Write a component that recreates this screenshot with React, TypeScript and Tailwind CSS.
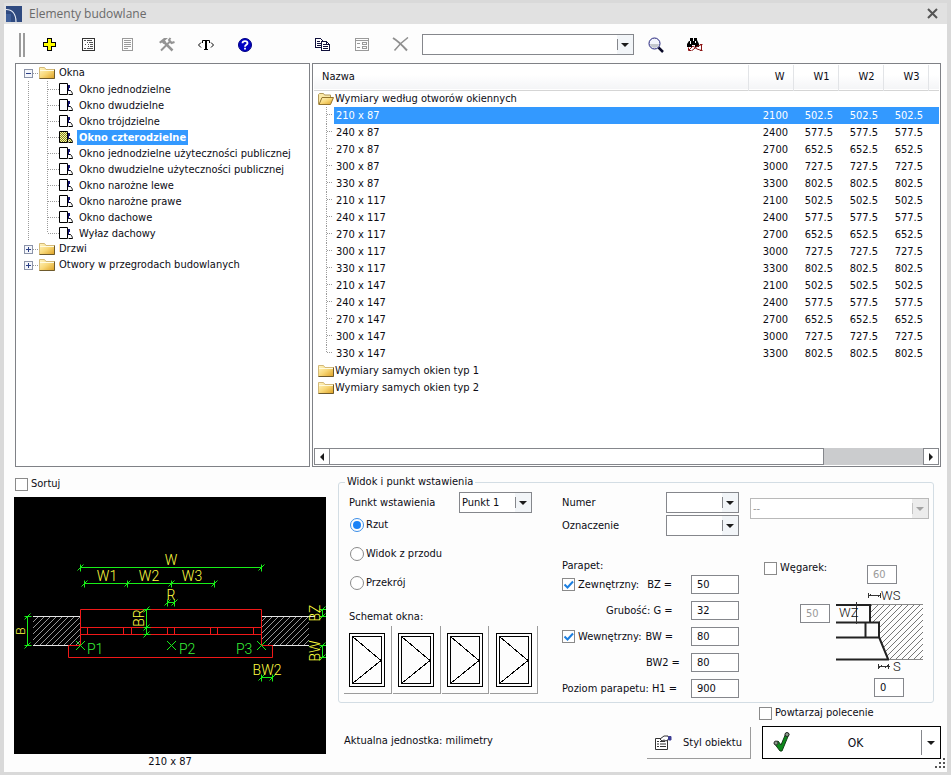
import { useState, type ReactNode } from "react";
import clsx from "clsx";

type SizeRow = { name: string; w: string; part: string };

const WINDOW_TYPES = [
  "Okno jednodzielne",
  "Okno dwudzielne",
  "Okno trójdzielne",
  "Okno czterodzielne",
  "Okno jednodzielne użyteczności publicznej",
  "Okno dwudzielne użyteczności publicznej",
  "Okno narożne lewe",
  "Okno narożne prawe",
  "Okno dachowe",
  "Wyłaz dachowy",
];

const WIDTHS = [
  { mm: "210", w: "2100", part: "502.5" },
  { mm: "240", w: "2400", part: "577.5" },
  { mm: "270", w: "2700", part: "652.5" },
  { mm: "300", w: "3000", part: "727.5" },
  { mm: "330", w: "3300", part: "802.5" },
];

const SIZES: SizeRow[] = ["87", "117", "147"].flatMap(h =>
  WIDTHS.map(x => ({ name: `${x.mm} x ${h}`, w: x.w, part: x.part }))
);

/* ---------- icons ---------- */

function Folder({ open = false }: { open?: boolean }) {
  return (
    <svg width="16" height="14" viewBox="0 0 16 14" className="shrink-0">
      <defs>
        <linearGradient id="gold" x1="0" y1="0" x2="1" y2="1">
          <stop offset="0" stopColor="#fff6c8" />
          <stop offset="0.5" stopColor="#f8d878" />
          <stop offset="1" stopColor="#dc9f22" />
        </linearGradient>
      </defs>
      {open ? (
        <>
          <path d="M.5 12.500v-10l1-1h4l1 1.500h6v3" fill="#fbe9a8" stroke="#b39a5a" />
          <path d="M1 12.500l3-7h11.500l-3 7z" fill="url(#gold)" stroke="#94742c" />
        </>
      ) : (
        <>
          <path d="M.5 12.500v-11h5l1.500 2h8.500v9z" fill="url(#gold)" stroke="#d3b978" />
          <path d="M1 4.500h14" stroke="#fffbe0" />
          <path d="M.5 12.500h15v-9" fill="none" stroke="#6e5a2c" />
        </>
      )}
    </svg>
  );
}

function WindowIcon({ selected = false }: { selected?: boolean }) {
  return (
    <svg width="15" height="14" viewBox="0 0 15 14" className="shrink-0">
      <defs>
        <pattern id="olive" width="2" height="2" patternUnits="userSpaceOnUse">
          <rect width="2" height="2" fill="#f4f4a8" />
          <rect width="1" height="1" fill="#85851c" />
          <rect x="1" y="1" width="1" height="1" fill="#85851c" />
        </pattern>
      </defs>
      <path d="M.5 1.500h8v11h-8z" fill={selected ? "url(#olive)" : "#fff"} stroke="#000" />
      <path d="M9 8.500h2.500c1 1 2 2.500 2 4h-4" fill={selected ? "url(#olive)" : "#fff"} stroke="#000" />
      <path d="M9 3h2v3h-2z" fill="#10106e" />
      <path d="M9.500 5v4" stroke="#10106e" />
    </svg>
  );
}

function ToolButton({ label, children }: { label: string; children: ReactNode }) {
  return (
    <button aria-label={label} className="flex w-[39px] h-6 items-center justify-center">
      {children}
    </button>
  );
}

function Arrow({ dir = "down", dim = false }: { dir?: "down" | "left" | "right"; dim?: boolean }) {
  const d = { down: "M0 2h8l-4 4z", left: "M6 0v8l-4-4z", right: "M2 0v8l4-4z" }[dir];
  return (
    <svg width="8" height="8" viewBox="0 0 8 8" fill={dim ? "#a3a3a3" : "#1b1b1b"}>
      <path d={d} />
    </svg>
  );
}

function PlusIcon() {
  return (
    <svg width="13" height="13" viewBox="0 0 13 13" shapeRendering="crispEdges">
      <path d="M4.500.5h4v4h4v4h-4v4h-4v-4h-4v-4h4z" fill="#ffff00" stroke="#000" />
    </svg>
  );
}

function DetailsIcon() {
  return (
    <svg width="13" height="13" viewBox="0 0 13 13" fill="none" stroke="#333" shapeRendering="crispEdges">
      <path d="M.5.5h12v12h-12z" />
      <path d="M2 2.500h2M5 2.500h5M5 4.500h1M7 4.500h4M3 6.500h1M6 6.500h1M8 6.500h3M6 8.500h1M8 8.500h3M2 10.500h2M5 10.500h6" stroke="#555" />
    </svg>
  );
}

function PageIcon() {
  return (
    <svg width="11" height="13" viewBox="0 0 11 13" fill="none" stroke="#9a9a9a" shapeRendering="crispEdges">
      <path d="M.5.5h10v12h-10z" />
      <path d="M2 2.500h7M2 4.500h7M2 6.500h7M2 8.500h7M2 10.500h4" />
    </svg>
  );
}

function ToolsIcon() {
  return (
    <svg width="16" height="15" viewBox="0 0 16 15" fill="none" stroke="#949494">
      <path d="M5 5l8.500 8.500" strokeWidth="2.500" />
      <path d="M11 4.500L2 13.500" strokeWidth="2" />
      <path d="M0 5l5-4h4L6 3.500 7 5 4.500 7 3 5.500 1.500 6.500z" fill="#949494" stroke="none" />
      <path d="M11.500 1L10 3l2.500 3 3-1" strokeWidth="2" />
    </svg>
  );
}

function TextIcon() {
  return (
    <svg width="18" height="14" viewBox="0 0 18 14" fill="none" stroke="#000">
      <path d="M4 4.500L1.500 7 4 9.500M14 4.500L16.500 7 14 9.500" />
      <path d="M5.500 5v-2.500h7V5M7 11.500h4" />
      <path d="M9 2.500v9" strokeWidth="2" />
    </svg>
  );
}

function HelpIcon() {
  return (
    <svg width="14" height="14" viewBox="0 0 14 14">
      <circle cx="7" cy="7" r="6.500" fill="#0000c4" stroke="#000080" />
      <path d="M4.500 5.200C4.500 2.400 9.500 2.400 9.500 5.200 9.500 6.700 7 6.700 7 8.700M7 9.800v1.700" fill="none" stroke="#fff" strokeWidth="1.800" />
    </svg>
  );
}

function CopyIcon() {
  return (
    <svg width="16" height="14" viewBox="0 0 16 14" fill="#fff" stroke="#10103c" shapeRendering="crispEdges">
      <path d="M.5.5h5l3 3v6h-8z" />
      <path d="M2 3.500h3M2 5.500h4M2 7.500h4" />
      <path d="M6.500 3.500h5l3 3v6h-8z" />
      <path d="M11.500 3.500v3h3M8 6.500h3M8 8.500h5M8 10.500h5" fill="none" />
    </svg>
  );
}

function FormIcon() {
  return (
    <svg width="14" height="13" viewBox="0 0 14 13" fill="none" stroke="#9a9a9a" shapeRendering="crispEdges">
      <path d="M.5.5h13v12h-13zM1 2.500h12" />
      <path d="M2 5.500h3M2 9.500h3M7.500 4.500h4v2h-4zM7.500 8.500h4v2h-4z" />
    </svg>
  );
}

function DeleteIcon() {
  return (
    <svg width="17" height="15" viewBox="0 0 17 15" fill="none" stroke="#8f8f8f">
      <path d="M1 1c5 3 9 7 14 12.500" strokeWidth="2" />
      <path d="M16 .5C11 4 7 8 2.500 13.500" strokeWidth="1.500" />
    </svg>
  );
}

function SearchIcon() {
  return (
    <svg width="16" height="16" viewBox="0 0 16 16">
      <circle cx="6.500" cy="6.500" r="5.500" fill="#f3f4fc" stroke="#20207a" />
      <path d="M2 7h9c0 5-9 5-9 0z" fill="#c3c6cc" />
      <path d="M10.500 10.500l4.500 4.500" stroke="#0a0a28" strokeWidth="2.500" />
    </svg>
  );
}

function FindIcon() {
  return (
    <svg width="16" height="15" viewBox="0 0 16 15">
      <path d="M2 4h1V1h3v3h1V1h3v2l2 4v3H8V8H5v2H0V7z" fill="#000" />
      <path d="M3.500 4v3M8.500 4v2" stroke="#fff" />
      <path d="M1.500 10.500v3h3M2 13l4-4 4 3 4.500 1.500v-6L10 9.500 5 13.500M13 7.500h2.500M13 13.500h2.500" fill="none" stroke="#8c1414" />
    </svg>
  );
}

/* ---------- form parts ---------- */

function Combo({
  label,
  options = [""],
  className,
  disabled = false,
}: {
  label: string;
  options?: string[];
  className?: string;
  disabled?: boolean;
}) {
  return (
    <div className={clsx("relative h-[21px] shrink-0", className)}>
      <select
        aria-label={label}
        disabled={disabled}
        className={clsx(
          "block size-full appearance-none border pl-0.5 pr-5 outline-none",
          disabled ? "border-[#b9b9b9] bg-white text-[#9a9a9a]" : "border-[#85878c] bg-white"
        )}
      >
        {options.map(o => <option key={o}>{o}</option>)}
      </select>
      <span
        className={clsx(
          "pointer-events-none absolute inset-y-px right-px flex w-4 items-center justify-center",
          disabled ? "bg-[#ececec]" : "bg-[#f2f5f8]"
        )}
      >
        <span className={clsx("absolute inset-y-1 left-0 border-l", disabled ? "border-[#c4c4c4]" : "border-[#85878c]")} />
        <Arrow dim={disabled} />
      </span>
    </div>
  );
}

function NumberBox({ label, value, className, disabled = false }: {
  label: string;
  value: string;
  className: string;
  disabled?: boolean;
}) {
  return (
    <input
      aria-label={label}
      defaultValue={value}
      disabled={disabled}
      className={clsx("h-[19px] shrink-0 border border-[#85878c] bg-white pl-[5px] outline-none disabled:text-[#9a9a9a]", className)}
    />
  );
}

function Check({ label, checked = false }: { label: string; checked?: boolean }) {
  return (
    <label className="flex items-center gap-[3px] whitespace-nowrap">
      <span className="relative size-[13px] shrink-0">
        <input
          type="checkbox"
          defaultChecked={checked}
          className="peer block size-[13px] appearance-none border border-[#8a8a8a] bg-white"
        />
        <svg viewBox="0 0 13 13" className="pointer-events-none absolute inset-0 hidden peer-checked:block">
          <path d="M2.500 6.500l3 3 5.500-6" fill="none" stroke="#1c7fe0" strokeWidth="2" />
        </svg>
      </span>
      {label}
    </label>
  );
}

function Radio({ label, checked = false }: { label: string; checked?: boolean }) {
  return (
    <label className="flex h-3.5 items-center gap-0.5">
      <input
        type="radio"
        name="widok"
        defaultChecked={checked}
        className="size-3.5 shrink-0 appearance-none rounded-full border border-[#8a8a8a] bg-white p-0.5 checked:border-[#3b8ee8] checked:bg-[#1a82f7] checked:bg-clip-content"
      />
      {label}
    </label>
  );
}

/* ---------- left tree ---------- */

function TreeBranch({ open }: { open: boolean }) {
  return (
    <svg width="15" height="16" viewBox="0 0 15 16" shapeRendering="crispEdges" className="shrink-0">
      <path d="M9 8.500h6" stroke="#9b9b9b" strokeDasharray="1 1" />
      <rect x=".5" y="4.500" width="8" height="8" fill="#f4f6fb" stroke="#8b93a8" />
      <path d={open ? "M2 8.500h5" : "M2 8.500h5M4.500 6v5"} stroke="#2b3f86" />
    </svg>
  );
}

function TreeFolder({ name, open = false }: { name: string; open?: boolean }) {
  return (
    <div className="flex h-4 items-center">
      <TreeBranch open={open} />
      <Folder />
      <span className="ml-1 leading-4">{name}</span>
    </div>
  );
}

function ElementTree() {
  const [selected, setSelected] = useState("Okno czterodzielne");
  return (
    <div className="w-[295px] shrink-0 border border-[#7f8186] bg-white pt-px pl-2">
      <ul>
        <li>
          <TreeFolder name="Okna" open />
          <ul>
            {WINDOW_TYPES.map((t, i) => (
              <li key={t} className="flex h-4 items-center">
                <svg width="35" height="16" viewBox="0 0 35 16" shapeRendering="crispEdges" className="shrink-0">
                  <path
                    d={i < WINDOW_TYPES.length - 1 ? "M4.500 0v16M23.500 0v16M24 8.500h11" : "M4.500 0v16M23.500 0v8M24 8.500h11"}
                    stroke="#9b9b9b"
                    strokeDasharray="1 1"
                  />
                </svg>
                <WindowIcon selected={t === selected} />
                <button
                  onClick={() => setSelected(t)}
                  className={clsx(
                    "ml-[3px] h-[15px] px-0.5 leading-[15px] whitespace-nowrap",
                    t === selected && "bg-[#3399ff] font-bold text-white"
                  )}
                >
                  {t}
                </button>
              </li>
            ))}
          </ul>
        </li>
        {["Drzwi", "Otwory w przegrodach budowlanych"].map(t => (
          <li key={t}><TreeFolder name={t} /></li>
        ))}
      </ul>
    </div>
  );
}

/* ---------- size list ---------- */

function FolderRow({ name, open = false }: { name: string; open?: boolean }) {
  return (
    <tr className="h-[17px]">
      <td colSpan={6} className="p-0">
        <div className="flex items-center gap-px pl-1">
          <Folder open={open} />
          {name}
        </div>
      </td>
    </tr>
  );
}

function SizeList() {
  const [active, setActive] = useState(0);
  return (
    <div className="flex min-w-0 flex-1 flex-col border border-[#7f8186] bg-white p-px">
      <table className="w-full table-fixed border-collapse">
        <colgroup>
          <col />
          <col className="w-[45px]" />
          <col className="w-[45px]" />
          <col className="w-[45px]" />
          <col className="w-[45px]" />
          <col className="w-[11px]" />
        </colgroup>
        <thead>
          <tr className="h-[25px] border-b border-[#d5d5d5] bg-linear-to-b from-white from-40% to-[#f4f5f7]">
            <th className="pl-2 text-left font-normal">Nazwa</th>
            {["W", "W1", "W2", "W3"].map(h => (
              <th key={h} className="border-l border-[#e2e4e7] pr-2 text-right font-normal">{h}</th>
            ))}
            <th className="border-l border-[#e2e4e7]" />
          </tr>
        </thead>
        <tbody>
          <FolderRow name="Wymiary według otworów okiennych" open />
          {SIZES.map((r, i) => {
            const on = i === active;
            const cell = clsx("p-0 pr-[5px] text-right", on && "bg-[#3399ff] text-white");
            return (
              <tr key={r.name} onClick={() => setActive(i)} className="h-[17px]">
                <td className="p-0">
                  <div className="flex h-[17px] items-center">
                    <svg width="20" height="17" viewBox="0 0 20 17" shapeRendering="crispEdges" className="shrink-0">
                      <path
                        d={i < SIZES.length - 1 ? "M12.500 0v17M13 7.500h6" : "M12.500 0v8M13 7.500h6"}
                        stroke="#9b9b9b"
                        strokeDasharray="1 1"
                      />
                    </svg>
                    <span className={clsx("h-[17px] flex-1 pl-0.5 leading-[17px]", on && "bg-[#3399ff] text-white")}>{r.name}</span>
                  </div>
                </td>
                <td className={cell}>{r.w}</td>
                <td className={cell}>{r.part}</td>
                <td className={cell}>{r.part}</td>
                <td className={cell}>{r.part}</td>
                <td className={cell} />
              </tr>
            );
          })}
          <FolderRow name="Wymiary samych okien typ 1" />
          <FolderRow name="Wymiary samych okien typ 2" />
        </tbody>
      </table>
      <div className="mt-auto flex h-[17px] bg-[#cbccce]">
        <button aria-label="W lewo" className="flex w-[17px] items-center justify-center border border-[#85878c] bg-white"><Arrow dir="left" /></button>
        <div className="w-5/6 border border-l-0 border-[#85878c] bg-white" />
        <div className="w-1/6" />
        <button aria-label="W prawo" className="flex w-[17px] items-center justify-center border border-[#85878c] bg-white"><Arrow dir="right" /></button>
      </div>
    </div>
  );
}

/* ---------- drawings ---------- */

// dimension line with slashed end ticks, horizontal
function DimH({ y, xs }: { y: number; xs: number[] }) {
  return (
    <g fill="none" stroke="#18ee18">
      <path d={`M${xs[0]} ${y}H${xs[xs.length - 1]}`} />
      <path d={xs.map(x => `M${x} ${y - 3}v7M${x - 3} ${y + 3}l6-6`).join("")} />
    </g>
  );
}

function DimV({ x, ys }: { x: number; ys: number[] }) {
  return (
    <g fill="none" stroke="#18ee18">
      <path d={`M${x} ${ys[0]}V${ys[ys.length - 1]}`} />
      <path d={ys.map(y => `M${x - 3} ${y}h7M${x - 3} ${y + 3}l6-6`).join("")} />
    </g>
  );
}

function Preview() {
  return (
    <svg viewBox="0 0 312 257" className="block w-full bg-black font-['Roboto',sans-serif] text-[14px] font-light">
      <defs>
        <pattern id="wall" width="6" height="6" patternUnits="userSpaceOnUse">
          <path d="M-1 7L7-1M-1 1l2-2M5 7l2-2" stroke="#d8d8d8" strokeWidth="0.700" />
        </pattern>
      </defs>
      <path d="M19 119h47v29h-47zM247 119h48v29h-48z" fill="url(#wall)" />
      <path d="M19 119.500h47M19 148.500h47M247 119.500h54M247 148.500h48" stroke="#e4e4e4" />
      <g fill="none" stroke="#f01818">
        <path d="M66.500 148.500v-36h181v36M66.500 148.500h-12v12h204v-12h-11" />
        <path d="M66.500 130.500h181M66.500 137.500h181" />
        <path d="M73.500 130v7M109.500 130v7M117.500 130v7M153.500 130v7M160.500 130v7M196.500 130v7M203.500 130v7M239.500 130v7" />
      </g>
      <DimH y={70.5} xs={[66.5, 247.5]} />
      <DimH y={86.5} xs={[70.5, 113.5, 157.5, 200.5]} />
      <DimH y={105.5} xs={[153.5, 160.5]} />
      <DimH y={180.5} xs={[247.5, 258.5]} />
      <DimV x={13.5} ys={[119.5, 148.5]} />
      <DimV x={132.5} ys={[112.5, 130.5, 137.5]} />
      <DimV x={308.5} ys={[112.5, 119.5]} />
      <DimV x={308.5} ys={[148.5, 160.5]} />
      <path d="M62 144l9 9M62 153l9-9M153 144l9 9M153 153l9-9M243 144l9 9M243 153l9-9" stroke="#18ee18" />
      <g fill="#ffff40" textAnchor="middle">
        <text x="157" y="68">W</text>
        <text x="93" y="84">W1</text>
        <text x="135" y="84">W2</text>
        <text x="178" y="84">W3</text>
        <text x="157" y="103">R</text>
        <text x="253" y="178">BW2</text>
        <text transform="translate(130 121) rotate(-90)">BR</text>
        <text transform="translate(11 134) rotate(-90)" className="text-[12px]">B</text>
        <text transform="translate(306 116) rotate(-90)">BZ</text>
        <text transform="translate(306 154) rotate(-90)">BW</text>
      </g>
      <g fill="#38f038">
        <text x="73" y="157">P1</text>
        <text x="165" y="157">P2</text>
        <text x="222" y="157">P3</text>
      </g>
    </svg>
  );
}

function RebateDrawing() {
  return (
    <svg width="89" height="88" viewBox="0 0 89 88" className="shrink-0 font-['Roboto',sans-serif] text-[13px] font-light">
      <defs>
        <pattern id="brick" width="6" height="6" patternUnits="userSpaceOnUse">
          <path d="M-1 7L7-1" stroke="#666" strokeWidth="0.900" />
        </pattern>
      </defs>
      <path d="M35 16h53v55H53L43 49V34h-8z" fill="url(#brick)" />
      <path d="M35 16.500h53M53 71.500h35" stroke="#888" />
      <path d="M1 17h34v17M1 34.500h43v15M1 49.500h43M30.500 35v14M44 49l9 22M1 71.500h53" fill="none" stroke="#222" strokeWidth="2" />
      <path d="M21.500 14v22M33 7.500h13M33.500 5v5M45.500 5v5M33 9l3-3M43 9l3-3M43 78.500h12M43.500 76v5M53.500 76v5M44 80l3-3M50 80l3-3" stroke="#333" />
      <g fill="#111">
        <text x="46" y="12">WS</text>
        <text x="4" y="29">WZ</text>
        <text x="58" y="83">S</text>
      </g>
    </svg>
  );
}

function Sash() {
  return (
    <svg width="36" height="54" viewBox="0 0 36 54" fill="none" stroke="#000" shapeRendering="crispEdges">
      <path d="M.5.5h35v53h-35z" />
      <path d="M3.500 3.500h29v47h-29z" />
      <path d="M4 4l28 23.500L4 50" />
    </svg>
  );
}

/* ---------- bottom right ---------- */

function SillRow({ children, value, label }: { children: ReactNode; value: string; label: string }) {
  return (
    <div className="flex h-[19px] items-center justify-between">
      {children}
      <NumberBox label={label} value={value} className="w-12" />
    </div>
  );
}

function PlacementForm() {
  return (
    <fieldset className="mr-[7px] min-w-0 rounded-[3px] border border-[#d3dde4] pr-1 pb-1 pl-[5px]">
      <legend className="ml-px px-0.5">Widok i punkt wstawienia</legend>
      <div className="flex">
        <div className="mr-6 flex w-[194px] flex-col pt-[3px]">
          <div className="flex items-center justify-between pr-1.5 pl-[5px]">
            Punkt wstawienia
            <Combo label="Punkt wstawienia" options={["Punkt 1", "Punkt 2", "Punkt 3"]} className="w-[73px]" />
          </div>
          <div className="flex flex-col gap-[15px] pt-[5px] pl-1.5">
            <Radio label="Rzut" checked />
            <Radio label="Widok z przodu" />
            <Radio label="Przekrój" />
          </div>
          <div className="pt-5 pb-0.5 pl-[5px]">Schemat okna:</div>
          <div className="flex gap-px">
            {[1, 2, 3, 4].map(n => (
              <button
                key={n}
                aria-label={`Skrzydło ${n}`}
                className="flex h-[68px] flex-1 items-center justify-center border-r border-b border-[#9c9c9c]"
              >
                <Sash />
              </button>
            ))}
          </div>
        </div>

        <div className="flex w-[177px] flex-col pt-[3px]">
          <div className="flex items-center justify-between">Numer<Combo label="Numer" className="w-[73px]" /></div>
          <div className="mt-0.5 flex items-center justify-between">Oznaczenie<Combo label="Oznaczenie" className="w-[73px]" /></div>
          <div className="pt-[23px] pb-0.5">Parapet:</div>
          <div className="flex flex-col gap-[7px]">
            <SillRow label="BZ" value="50">
              <Check label="Zewnętrzny:" checked />
              <span className="flex-1 pl-2">BZ =</span>
            </SillRow>
            <SillRow label="G" value="32"><span className="pl-11">Grubość: G =</span></SillRow>
            <SillRow label="BW" value="80">
              <Check label="Wewnętrzny:" checked />
              <span className="flex-1 pl-1">BW =</span>
            </SillRow>
            <SillRow label="BW2" value="80"><span className="pl-[84px]">BW2 =</span></SillRow>
            <SillRow label="H1" value="900">Poziom parapetu: H1 =</SillRow>
          </div>
        </div>

        <div className="ml-auto flex w-[179px] flex-col pt-[9px]">
          <Combo label="Typ" options={["--"]} className="w-full" disabled />
          <div className="flex items-start justify-between pt-[42px] pr-8 pl-3.5">
            <Check label="Węgarek:" />
            <NumberBox label="WS" value="60" className="mt-1 w-[30px]" disabled />
          </div>
          <div className="flex items-start justify-end gap-[5px] pt-1 pr-[5px]">
            <div className="pt-4"><NumberBox label="WZ" value="50" className="w-[30px]" disabled /></div>
            <RebateDrawing />
          </div>
          <div className="flex justify-end pt-0.5 pr-[25px]">
            <NumberBox label="S" value="0" className="w-[30px]" />
          </div>
        </div>
      </div>
    </fieldset>
  );
}

function Footer() {
  return (
    <div className="flex items-end pl-1.5">
      <span className="mb-[11px] flex-1">Aktualna jednostka: milimetry</span>
      <button className="mr-[11px] flex h-8 w-[104px] items-center gap-[11px] border-r border-b border-[#9c9c9c] pl-2">
        <svg width="17" height="15" viewBox="0 0 17 15" fill="none" stroke="#333" className="shrink-0">
          <path d="M.5 3.500h12v11H.5z" fill="#fff" />
          <path d="M2 6.500h2M5 6.500h5M2 9h2M5 9h6M2 11.500h2M5 11.500h6" />
          <path d="M5 4l4-3h4l1 3-3 2-2-1-2 1z" fill="#fff" />
          <path d="M13.500 1.500h2.500v3.500h-2.500z" fill="#3d3d94" stroke="#3d3d94" />
        </svg>
        Styl obiektu
      </button>
      <div className="w-[179px]">
        <div className="mb-1.5 -ml-[3px]"><Check label="Powtarzaj polecenie" /></div>
        <div className="flex h-[33px] items-center border border-black bg-white">
          <button className="flex h-full flex-1 items-center pl-2.5">
            <svg width="17" height="21" viewBox="0 0 17 21">
              <path d="M1 11l4-2 3 4L13 1l3 1-7 17H7z" fill="#0d8a1c" stroke="#123d16" />
              <circle cx="14" cy="2.500" r="2" fill="#8a9a8a" stroke="#222" />
              <circle cx="3" cy="11" r="2" fill="#8a9a8a" stroke="#333" />
            </svg>
            <span className="flex-1 text-center text-[12px]">OK</span>
          </button>
          <button aria-label="Więcej" className="flex h-[25px] w-[19px] items-center justify-center border-l border-[#85878c]"><Arrow /></button>
        </div>
      </div>
    </div>
  );
}

export default function App() {
  return (
    <div className="flex min-h-screen flex-col bg-[#d9d9d9] pt-[3px] pr-1 pb-[3px] pl-1 font-['DejaVu_Sans_Condensed','DejaVu_Sans',sans-serif] text-[11px] leading-[14px] text-[#0c0c14]">
      <header className="flex h-[21px] items-center justify-between bg-[#e1e1e1] pr-[9px] pl-0.5">
        <div className="flex items-center gap-[7px]">
          <svg width="16" height="16" viewBox="0 0 16 16">
            <rect width="16" height="16" fill="#2f4a80" />
            <path d="M0 8h5v8H0z" fill="#3f5f9a" />
            <path d="M0 3.500c6 0 10 4 10 12.500" fill="none" stroke="#e9eef8" strokeWidth="1.200" />
          </svg>
          <h1 className="font-['Open_Sans',sans-serif] text-[12px] text-[#6a6a6a]">Elementy budowlane</h1>
        </div>
        <button aria-label="Zamknij">
          <svg width="11" height="11" viewBox="0 0 11 11"><path d="M1 1l9 9M10 1l-9 9" stroke="#555" strokeWidth="2" /></svg>
        </button>
      </header>

      <main className="relative flex flex-1 flex-col bg-[#fdfdfd] pr-1.5 pl-[11px]">
        <div className="flex h-[39px] items-center pt-0.5">
          <div className="ml-1 flex h-6 w-[11px] gap-0.5">
            <span className="w-0.5 bg-[#9c9c9c]" />
            <span className="w-0.5 bg-[#9c9c9c]" />
          </div>
          <ToolButton label="Dodaj"><PlusIcon /></ToolButton>
          <ToolButton label="Szczegóły"><DetailsIcon /></ToolButton>
          <ToolButton label="Lista"><PageIcon /></ToolButton>
          <ToolButton label="Narzędzia"><ToolsIcon /></ToolButton>
          <ToolButton label="Tekst"><TextIcon /></ToolButton>
          <ToolButton label="Pomoc"><HelpIcon /></ToolButton>
          <div className="ml-[39px] flex items-center">
            <ToolButton label="Kopiuj"><CopyIcon /></ToolButton>
            <ToolButton label="Właściwości"><FormIcon /></ToolButton>
            <ToolButton label="Usuń"><DeleteIcon /></ToolButton>
          </div>
          <Combo label="Szukaj" className="mx-0.5 w-[212px]" />
          <ToolButton label="Znajdź"><SearchIcon /></ToolButton>
          <ToolButton label="Znajdź następny"><FindIcon /></ToolButton>
        </div>

        <div className="flex h-[404px] gap-0.5">
          <ElementTree />
          <SizeList />
        </div>

        <div className="flex">
          <div className="-ml-px w-[312px] shrink-0">
            <div className="flex h-[30px] items-center pt-1 pl-px"><Check label="Sortuj" /></div>
            <Preview />
            <div className="pt-px text-center">210 x 87</div>
          </div>
          <div className="ml-3 flex min-w-0 flex-1 flex-col pt-2">
            <PlacementForm />
            <div className="pt-[3px]"><Footer /></div>
          </div>
        </div>

        {/* resize grip */}
        <svg width="12" height="12" viewBox="0 0 12 12" fill="#555" className="absolute right-0 bottom-0.5">
          <path d="M8 0h2v2h-2zM4 4h2v2h-2zM8 4h2v2h-2zM0 8h2v2h-2zM4 8h2v2h-2zM8 8h2v2h-2z" />
        </svg>
      </main>
    </div>
  );
}
